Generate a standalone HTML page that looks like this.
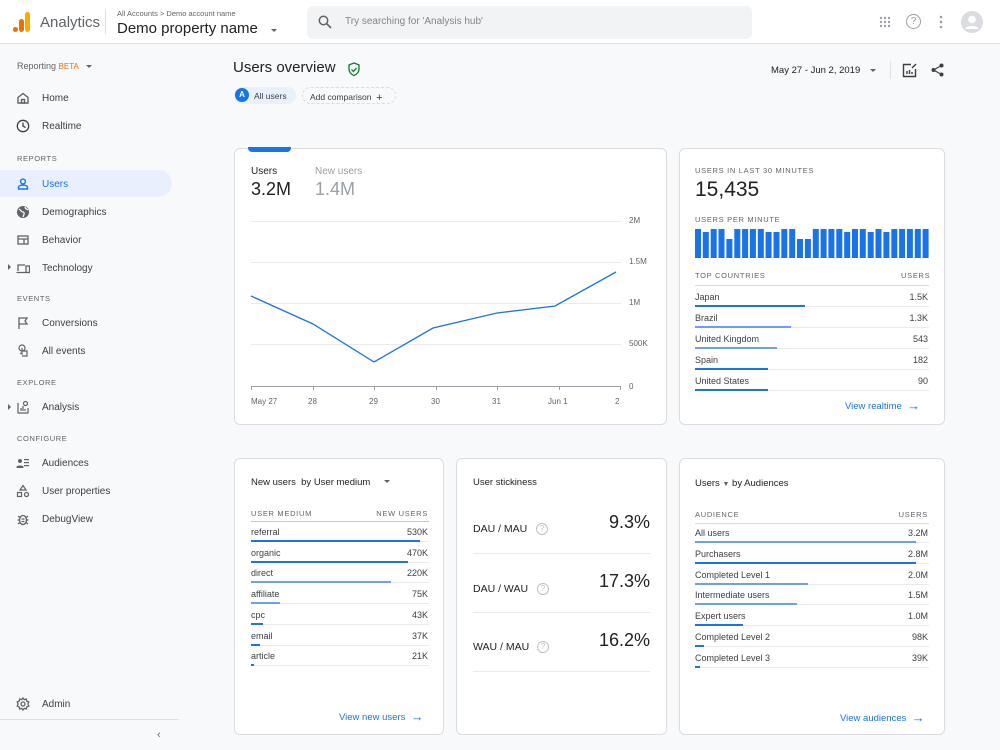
<!DOCTYPE html>
<html><head><meta charset="utf-8"><style>
*{box-sizing:border-box;margin:0;padding:0}
body{width:1000px;height:750px;overflow:hidden;background:#f8f9fa;font-family:"Liberation Sans",sans-serif;color:#3c4043;position:relative}
.a{position:absolute;white-space:nowrap}
.card{position:absolute;background:#fff;border:1px solid #dadce0;border-radius:6px}
.nav{position:absolute;left:42px;font-size:10px;color:#3c4043}
.ico{position:absolute;left:16px}
.sec{position:absolute;left:17px;font-size:7.5px;letter-spacing:.6px;color:#5f6368}
.hd{font-size:7.5px;letter-spacing:.7px;color:#5f6368}
.row{font-size:9px;color:#3c4043}
.ln{position:absolute;height:1px;background:#e8eaed}
.bar{position:absolute;height:2px;background:#1a73e8}
.lb{background:#6c9ef2}
.lnk{color:#1a73e8;font-size:9.5px}
.lnk b{font-weight:normal;font-size:13px;position:relative;top:1px}
</style></head><body>
<div class="a" style="left:0;top:0;width:1000px;height:44px;background:#fff;border-bottom:1px solid #e0e0e0"></div>
<svg class="a" style="left:12px;top:11px" width="20" height="22"><rect x="13" y="1" width="5" height="20" rx="2.5" fill="#f9ab00"/><rect x="7" y="8" width="5" height="13" rx="2.5" fill="#e37400"/><circle cx="3.5" cy="18.5" r="2.5" fill="#e37400"/></svg>
<div class="a" style="left:40px;top:14px;font-size:15px;color:#5f6368">Analytics</div>
<div class="a" style="left:105px;top:10px;width:1px;height:24px;background:#e0e0e0"></div>
<div class="a" style="left:117px;top:9px;font-size:7.5px;color:#5f6368">All Accounts &gt; Demo account name</div>
<div class="a" style="left:117px;top:20px;font-size:15px;color:#202124">Demo property name</div>
<div class="a" style="left:271px;top:29px;border:3.5px solid transparent;border-top:3.5px solid #5f6368"></div>
<div class="a" style="left:307px;top:6px;width:445px;height:33px;background:#f1f3f4;border-radius:6px"></div>
<svg class="a" style="left:318px;top:15px" width="14" height="14"><circle cx="5.5" cy="5.5" r="4.2" fill="none" stroke="#5f6368" stroke-width="1.5"/><path d="M8.5 8.5L13 13" stroke="#5f6368" stroke-width="1.6"/></svg>
<div class="a" style="left:345px;top:16px;font-size:10px;color:#80868b">Try searching for 'Analysis hub'</div>
<svg class="a" style="left:879px;top:16px" width="12" height="12" fill="#9aa0a6"><circle cx="2" cy="2" r="1.2"/><circle cx="6" cy="2" r="1.2"/><circle cx="10" cy="2" r="1.2"/><circle cx="2" cy="6" r="1.2"/><circle cx="6" cy="6" r="1.2"/><circle cx="10" cy="6" r="1.2"/><circle cx="2" cy="10" r="1.2"/><circle cx="6" cy="10" r="1.2"/><circle cx="10" cy="10" r="1.2"/></svg>
<div class="a" style="left:906px;top:14px;width:15px;height:15px;border:1.3px solid #9aa0a6;border-radius:50%;font-size:10px;color:#9aa0a6;text-align:center;line-height:13px">?</div>
<svg class="a" style="left:938px;top:15px" width="6" height="14" fill="#9aa0a6"><circle cx="3" cy="2" r="1.3"/><circle cx="3" cy="7" r="1.3"/><circle cx="3" cy="12" r="1.3"/></svg>
<svg class="a" style="left:961px;top:11px" width="22" height="22"><circle cx="11" cy="11" r="11" fill="#dadce0"/><circle cx="11" cy="8.5" r="3.8" fill="#fff"/><path d="M4 18c2-4 12-4 14 0" fill="#fff"/></svg>
<div class="a" style="left:17px;top:61px;font-size:9px;color:#5f6368">Reporting <span style="color:#e8710a;font-size:8px">BETA</span></div>
<div class="a" style="left:86px;top:65px;border:3px solid transparent;border-top:3px solid #5f6368"></div>
<svg class="ico" style="top:91px" width="14" height="14" fill="none" stroke="#5f6368" stroke-width="1.4"><path d="M2 6.5L7 2.5l5 4V12H2z"/><rect x="5.5" y="8.5" width="3" height="3.5"/></svg>
<div class="nav" style="top:93px">Home</div>
<svg class="ico" style="top:119px" width="14" height="14" fill="none" stroke="#3c4043" stroke-width="1.3"><circle cx="7" cy="7" r="5.7"/><path d="M7 3.5V7l2.5 1.6"/></svg>
<div class="nav" style="top:121px">Realtime</div>
<div class="sec" style="top:154px">REPORTS</div>
<div class="a" style="left:0;top:170px;width:172px;height:27px;background:#e8f0fe;border-radius:0 14px 14px 0"></div>
<svg class="ico" style="top:177px" width="14" height="14" fill="none" stroke="#1a73e8" stroke-width="1.4"><circle cx="7" cy="4.5" r="2.4"/><path d="M2.5 12v-1.5c0-1.5 2-2.5 4.5-2.5s4.5 1 4.5 2.5V12z"/></svg>
<div class="nav" style="top:179px;color:#1a73e8">Users</div>
<svg class="ico" style="top:205px" width="14" height="14"><circle cx="7" cy="7" r="6" fill="#5f6368"/><path d="M3 4c2 1 2 3 4 3s1 3 0 5M9 2c0 2 2 2 3 3" stroke="#fff" stroke-width="1.2" fill="none"/></svg>
<div class="nav" style="top:207px">Demographics</div>
<svg class="ico" style="top:233px" width="14" height="14" fill="none" stroke="#5f6368" stroke-width="1.3"><rect x="2" y="3" width="10" height="8"/><path d="M2 6h10M8 6v5"/></svg>
<div class="nav" style="top:235px">Behavior</div>
<div class="a" style="left:8px;top:264px;border:3px solid transparent;border-left:3px solid #5f6368"></div>
<svg class="ico" style="top:261px" width="14" height="14" fill="none" stroke="#5f6368" stroke-width="1.3"><path d="M2 10V4h7M0.5 11.5h9"/><rect x="10" y="5" width="3.5" height="6.5"/></svg>
<div class="nav" style="top:263px">Technology</div>
<div class="sec" style="top:294px">EVENTS</div>
<svg class="ico" style="top:316px" width="14" height="14" fill="none" stroke="#5f6368" stroke-width="1.3"><path d="M3 13V2h8l-2 3 2 3H3"/></svg>
<div class="nav" style="top:318px">Conversions</div>
<svg class="ico" style="top:344px" width="14" height="14" fill="none" stroke="#5f6368" stroke-width="1.2"><circle cx="6" cy="4" r="3"/><path d="M6 4v6l-2-1M6 7h5v5H6"/></svg>
<div class="nav" style="top:346px">All events</div>
<div class="sec" style="top:378px">EXPLORE</div>
<div class="a" style="left:8px;top:404px;border:3px solid transparent;border-left:3px solid #5f6368"></div>
<svg class="ico" style="top:400px" width="14" height="14" fill="none" stroke="#5f6368" stroke-width="1.2"><path d="M2 3v10h10V8M5 11V8M7 11V6M9 11V9"/><circle cx="9.5" cy="3.5" r="2"/></svg>
<div class="nav" style="top:402px">Analysis</div>
<div class="sec" style="top:434px">CONFIGURE</div>
<svg class="ico" style="top:456px" width="14" height="14" fill="#5f6368"><circle cx="4" cy="5" r="2"/><path d="M0.5 11c0-2 7-2 7 0v1h-7z"/><rect x="8" y="3" width="5" height="1.2"/><rect x="8" y="6" width="5" height="1.2"/><rect x="8" y="9" width="5" height="1.2"/></svg>
<div class="nav" style="top:458px">Audiences</div>
<svg class="ico" style="top:484px" width="14" height="14" fill="none" stroke="#5f6368" stroke-width="1.2"><path d="M7 1.5L10 6H4z"/><rect x="1.5" y="8.5" width="4" height="4"/><circle cx="10.5" cy="10.5" r="2"/></svg>
<div class="nav" style="top:486px">User properties</div>
<svg class="ico" style="top:512px" width="14" height="14" fill="none" stroke="#5f6368" stroke-width="1.3"><ellipse cx="7" cy="8" rx="3.5" ry="4.5"/><path d="M1.5 8h2M10.5 8h2M2 4l2 1.5M12 4l-2 1.5M2 12l2-1.5M12 12l-2-1.5M5.5 7h3M5.5 9.5h3"/></svg>
<div class="nav" style="top:514px">DebugView</div>
<svg class="ico" style="top:697px" width="14" height="14" fill="none" stroke="#5f6368" stroke-width="1.3"><circle cx="7" cy="7" r="2"/><path d="M7 1l1.3 1.6 2-.5.5 2L12.8 5l-.9 2 .9 2-2 .9-.5 2-2-.5L7 13l-1.3-1.6-2 .5-.5-2L1.2 9l.9-2-.9-2 2-.9.5-2 2 .5z"/></svg>
<div class="nav" style="top:699px">Admin</div>
<div class="a" style="left:0;top:719px;width:179px;height:1px;background:#e0e0e0"></div>
<div class="a" style="left:157px;top:729px;font-size:11px;color:#5f6368">‹</div>
<div class="a" style="left:233px;top:59px;font-size:15px;color:#202124">Users overview</div>
<svg class="a" style="left:347px;top:62px" width="14" height="15" fill="none" stroke="#188038" stroke-width="1.4"><path d="M7 1L2 3v4c0 3 2.2 5.5 5 6.5 2.8-1 5-3.5 5-6.5V3z"/><path d="M4.5 7.5l2 2 3-3.5"/></svg>
<div class="a" style="left:234px;top:87px;width:62px;height:17px;background:#e8f0fe;border-radius:9px"></div>
<div class="a" style="left:235px;top:88px;width:14px;height:14px;background:#1a73e8;border-radius:50%;color:#fff;font-size:8px;text-align:center;line-height:14px;font-weight:bold">A</div>
<div class="a" style="left:254px;top:91px;font-size:8.5px;color:#3c4043">All users</div>
<div class="a" style="left:302px;top:87px;width:94px;height:17px;border:1px dashed #dadce0;border-radius:9px"></div>
<div class="a" style="left:310px;top:91px;font-size:8.5px;color:#3c4043">Add comparison &nbsp;<span style="font-size:11px;position:relative;top:1px">+</span></div>
<div class="a" style="left:771px;top:65px;font-size:9.5px;color:#202124">May 27 - Jun 2, 2019</div>
<div class="a" style="left:870px;top:69px;border:3px solid transparent;border-top:3px solid #5f6368"></div>
<div class="a" style="left:890px;top:61px;width:1px;height:18px;background:#e0e0e0"></div>
<svg class="a" style="left:902px;top:63px" width="15" height="15" fill="none" stroke="#3c4043" stroke-width="1.4"><path d="M9 1.5H1.5v12h12V6M5 11V8M7.5 11V7M10 11V9M10 5l4-4"/></svg>
<svg class="a" style="left:931px;top:63px" width="13" height="14" fill="#3c4043"><circle cx="10.5" cy="2.5" r="2"/><circle cx="2.5" cy="7" r="2"/><circle cx="10.5" cy="11.5" r="2"/><path d="M10.5 2.5L2.5 7l8 4.5" stroke="#3c4043" stroke-width="1.2" fill="none"/></svg>
<div class="card" style="left:234px;top:148px;width:433px;height:277px"></div>
<div class="a" style="left:248px;top:147px;width:43px;height:5px;background:#1a73e8;border-radius:0 0 4px 4px"></div>
<div class="a" style="left:251px;top:166px;font-size:10px;color:#202124">Users</div>
<div class="a" style="left:251px;top:179px;font-size:18px;color:#202124">3.2M</div>
<div class="a" style="left:315px;top:166px;font-size:10px;color:#9aa0a6">New users</div>
<div class="a" style="left:315px;top:179px;font-size:18px;color:#9aa0a6">1.4M</div>
<svg class="a" style="left:240px;top:210px" width="420" height="200">
<g stroke="#e8eaed" stroke-width="1"><path d="M11 11.5H381M11 52.5H381M11 93.5H381M11 134.5H381"/></g>
<path d="M11 176.5H381" stroke="#9aa0a6"/>
<g stroke="#9aa0a6"><path d="M11.5 176v4M73.5 176v4M134.5 176v4M196.5 176v4M257.5 176v4M319.5 176v4M380.5 176v4"/></g>
<polyline points="11,86 73,114 134,152 193,118 257,103 315,96 376,62" fill="none" stroke="#1a73e8" stroke-width="1.3"/>
<g font-size="8" fill="#5f6368" font-family="Liberation Sans"><text x="389" y="13">2M</text><text x="389" y="54">1.5M</text><text x="389" y="95">1M</text><text x="389" y="136">500K</text><text x="389" y="179">0</text>
<text x="11" y="194">May 27</text><text x="68" y="194">28</text><text x="129" y="194">29</text><text x="191" y="194">30</text><text x="252" y="194">31</text><text x="308" y="194">Jun 1</text><text x="375" y="194">2</text></g>
</svg>
<div class="card" style="left:679px;top:148px;width:266px;height:277px"></div>
<div class="a hd" style="left:695px;top:166px">USERS IN LAST 30 MINUTES</div>
<div class="a" style="left:695px;top:178px;font-size:21px;color:#202124">15,435</div>
<div class="a hd" style="left:695px;top:215px">USERS PER MINUTE</div>
<svg class="a" style="left:695px;top:228px" width="234" height="31" id="bars"></svg>
<div class="a hd" style="left:695px;top:271px">TOP COUNTRIES</div>
<div class="a hd" style="left:901px;top:271px">USERS</div>
<div class="ln" style="left:695px;top:285px;width:234px;background:#dadce0"></div>
<div class="a row" style="left:695px;top:292px">Japan</div><div class="a row" style="right:72px;top:292px">1.5K</div><div class="bar" style="left:695px;top:305px;width:110px"></div><div class="ln" style="left:805px;top:306px;width:124px"></div>
<div class="a row" style="left:695px;top:313px">Brazil</div><div class="a row" style="right:72px;top:313px">1.3K</div><div class="bar lb" style="left:695px;top:326px;width:96px"></div><div class="ln" style="left:791px;top:327px;width:138px"></div>
<div class="a row" style="left:695px;top:334px">United Kingdom</div><div class="a row" style="right:72px;top:334px">543</div><div class="bar lb" style="left:695px;top:347px;width:82px"></div><div class="ln" style="left:777px;top:348px;width:152px"></div>
<div class="a row" style="left:695px;top:355px">Spain</div><div class="a row" style="right:72px;top:355px">182</div><div class="bar" style="left:695px;top:368px;width:73px"></div><div class="ln" style="left:768px;top:369px;width:161px"></div>
<div class="a row" style="left:695px;top:376px">United States</div><div class="a row" style="right:72px;top:376px">90</div><div class="bar" style="left:695px;top:389px;width:73px"></div><div class="ln" style="left:768px;top:390px;width:161px"></div>
<div class="a lnk" style="left:845px;top:397px">View realtime &nbsp;<b>→</b></div>
<div class="card" style="left:234px;top:458px;width:210px;height:277px"></div>
<div class="a" style="left:251px;top:477px;font-size:9.5px;color:#202124">New users &nbsp;by User medium</div>
<div class="a" style="left:384px;top:480px;border:3px solid transparent;border-top:3px solid #5f6368"></div>
<div class="a hd" style="left:251px;top:509px">USER MEDIUM</div><div class="a hd" style="right:572px;top:509px">NEW USERS</div>
<div class="ln" style="left:251px;top:521px;width:178px;background:#c8c8c8"></div>
<div id="med"></div>
<div class="a lnk" style="left:339px;top:708px">View new users &nbsp;<b>→</b></div>
<div class="card" style="left:456px;top:458px;width:211px;height:277px"></div>
<div class="a" style="left:473px;top:477px;font-size:9.5px;color:#202124">User stickiness</div>
<div class="a" style="left:473px;top:523px;font-size:10.5px;color:#202124">DAU / MAU</div><div class="a" style="left:536px;top:523px;width:12px;height:12px;border:1px solid #bdc1c6;border-radius:50%;font-size:8px;color:#bdc1c6;text-align:center;line-height:10px">?</div>
<div class="a" style="right:350px;top:512px;font-size:18px;color:#202124">9.3%</div>
<div class="ln" style="left:473px;top:553px;width:177px"></div>
<div class="a" style="left:473px;top:583px;font-size:10.5px;color:#202124">DAU / WAU</div><div class="a" style="left:537px;top:583px;width:12px;height:12px;border:1px solid #bdc1c6;border-radius:50%;font-size:8px;color:#bdc1c6;text-align:center;line-height:10px">?</div>
<div class="a" style="right:350px;top:571px;font-size:18px;color:#202124">17.3%</div>
<div class="ln" style="left:473px;top:612px;width:177px"></div>
<div class="a" style="left:473px;top:641px;font-size:10.5px;color:#202124">WAU / MAU</div><div class="a" style="left:537px;top:641px;width:12px;height:12px;border:1px solid #bdc1c6;border-radius:50%;font-size:8px;color:#bdc1c6;text-align:center;line-height:10px">?</div>
<div class="a" style="right:350px;top:630px;font-size:18px;color:#202124">16.2%</div>
<div class="ln" style="left:473px;top:671px;width:177px"></div>
<div class="card" style="left:679px;top:458px;width:266px;height:277px"></div>
<div class="a" style="left:695px;top:478px;font-size:9.5px;color:#202124">Users <span style="font-size:7px;color:#5f6368">▼</span> by Audiences</div>
<div class="a hd" style="left:695px;top:510px">AUDIENCE</div><div class="a hd" style="right:72px;top:510px">USERS</div>
<div class="ln" style="left:695px;top:523px;width:234px;background:#dadce0"></div>
<div id="aud"></div>
<div class="a lnk" style="left:840px;top:709px">View audiences &nbsp;<b>→</b></div>
<script>
(function(){
var h=[29,26,29,29,19,29,29,29,29,26,26,29,29,19,19,29,29,29,29,26,29,29,26,29,26,29,29,29,29,29],s='';
for(var i=0;i<30;i++){s+='<rect x="'+(i*7.85).toFixed(1)+'" y="'+(30-h[i])+'" width="6" height="'+h[i]+'" fill="#1a73e8"/>';}
document.getElementById('bars').innerHTML=s;
function rows(id,x,w,right,top,step,data){var o='';data.forEach(function(d,i){var y=top+i*step;
o+='<div class="a row" style="left:'+x+'px;top:'+y+'px">'+d[0]+'</div><div class="a row" style="right:'+right+'px;top:'+y+'px">'+d[1]+'</div>';
o+='<div class="bar'+(d[3]?' lb':'')+'" style="left:'+x+'px;top:'+(y+13)+'px;width:'+d[2]+'px"></div><div class="ln" style="left:'+(x+d[2])+'px;top:'+(y+14)+'px;width:'+(w-d[2])+'px"></div>';});
document.getElementById(id).outerHTML=o;}
rows('med',251,178,572,527,20.7,[['referral','530K',169],['organic','470K',157],['direct','220K',140,1],['affiliate','75K',29,1],['cpc','43K',12],['email','37K',9],['article','21K',3]]);
rows('aud',695,234,72,528,20.8,[['All users','3.2M',221,1],['Purchasers','2.8M',221],['Completed Level 1','2.0M',113,1],['Intermediate users','1.5M',102,1],['Expert users','1.0M',48],['Completed Level 2','98K',9],['Completed Level 3','39K',5]]);
})();
</script>
</body></html>
